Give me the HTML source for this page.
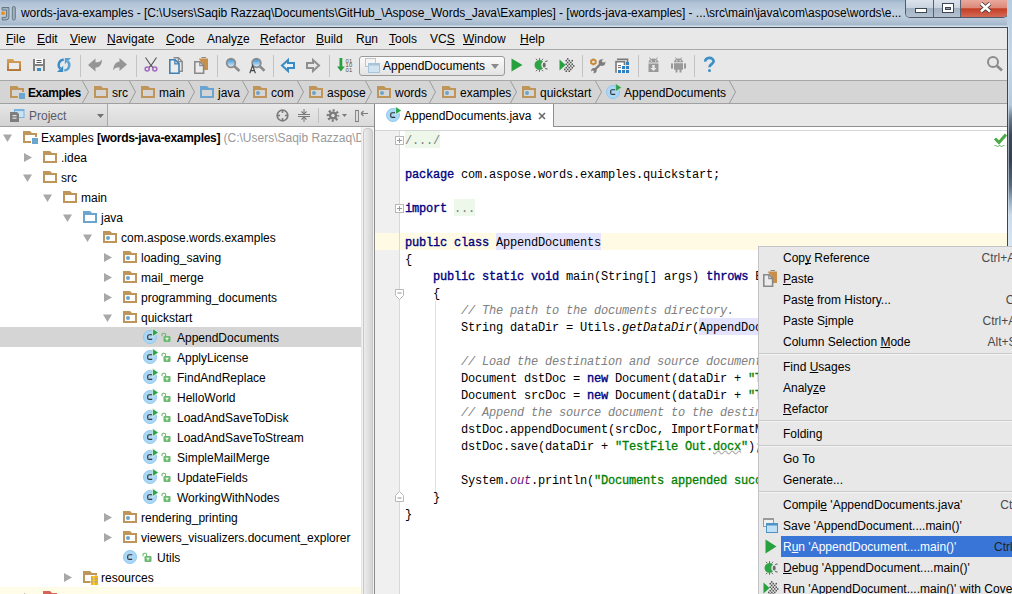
<!DOCTYPE html>
<html><head><meta charset="utf-8">
<style>
*{box-sizing:border-box}
html,body{margin:0;padding:0}
body{width:1012px;height:594px;overflow:hidden;position:relative;background:#e8e8e8;font-family:"Liberation Sans",sans-serif;font-size:12px;color:#000}
.a{position:absolute}
.t{position:absolute;white-space:pre;line-height:20px}
svg{position:absolute;overflow:visible}
#title{left:0;top:0;width:1012px;height:28px;background:linear-gradient(#9fb4c9 0,#afc2d6 3px,#c0cfdf 11px,#bccbdc 18px,#a3b7cb 25px,#d6e0ea 26px,#d6e0ea 27px)}
#menubar{left:0;top:28px;width:1007px;height:22px;background:#e8e8e8;border-bottom:1px solid #a9a9a9}
#menubar .t{top:1px;line-height:20px}
#toolbar{left:0;top:50px;width:1007px;height:30px;background:#e8e8e8}
.sep{position:absolute;width:1px;background:#c4c4c4}
#crumbs{left:0;top:80px;width:1007px;height:24px;background:#d5d5d5;border-top:1px solid #a8a8a8;border-bottom:1px solid #a0a0a0}
#projhdr{left:0;top:104px;width:374px;height:23px;background:linear-gradient(#e9e9e9,#dadada);border-bottom:1px solid #a0a0a0}
#tree{left:0;top:127px;width:374px;height:467px;background:#fff;overflow:hidden}
#split{left:374px;top:104px;width:1px;height:490px;background:#8a8a8a}
#tabs{left:375px;top:104px;width:632px;height:27px;background:#fff}
#editor{left:375px;top:131px;width:632px;height:463px;background:#fff;overflow:hidden}
.code{position:absolute;white-space:pre;font-family:"Liberation Mono",monospace;font-size:12px;letter-spacing:-0.2px;line-height:17px;left:30px}
.kw{color:#000080;font-weight:normal;-webkit-text-stroke:0.35px #000080}
.cm{color:#808080;font-style:italic}
.st{color:#008000;font-weight:normal;-webkit-text-stroke:0.3px #008000}
.it{font-style:italic}
.fl{color:#660e7a;font-style:italic}
#frame{left:1007px;top:0;width:5px;height:594px;background:linear-gradient(#b8cce0 0,#c2d7ea 60px,#b4cadf 105px,#6a7c8e 118px,#3c4857 135px,#34404e 160px,#56687b 185px,#9ab2c8 202px,#cadcec 215px,#d8e6f2 246px)}
#ctx{left:758px;top:246px;width:260px;height:360px;background:#e8e8e8;border:1px solid #c4c4c8;overflow:hidden}
#ctx .t{left:25px;line-height:21px}
#ctx .sc{color:#505050}
.msep{position:absolute;left:1px;right:0;height:1px;background:#c9c9c9}
u{text-decoration:underline;text-underline-offset:1px;text-decoration-skip-ink:none}
</style></head><body>
<svg width="0" height="0" style="position:absolute;left:0;top:0">
<defs>
<symbol id="td" viewBox="0 0 9 8"><path d="M0 0.5H9L4.5 8z" fill="#a8a8a8"/></symbol>
<symbol id="tr" viewBox="0 0 8 9"><path d="M0 0L8 4.5L0 9z" fill="#a8a8a8"/></symbol>
<symbol id="fold" viewBox="0 0 14 12"><path d="M0 0h7l2 2h5v10H0z" fill="#bf955a"/><rect x="2" y="4" width="10" height="6" fill="#fff"/></symbol>
<symbol id="jfold" viewBox="0 0 14 12"><path d="M0 0h7l2 2h5v10H0z" fill="#6ba5cf"/><rect x="2" y="4" width="10" height="6" fill="#fff"/></symbol>
<symbol id="pkg" viewBox="0 0 14 12"><path d="M0 0h7l2 2h5v10H0z" fill="#bf955a"/><rect x="2" y="4" width="10" height="6" fill="#fff"/><circle cx="5" cy="7" r="2" fill="#6aa4cd"/></symbol>
<symbol id="mod" viewBox="0 0 16 14"><path d="M0 0h7l2 2h5v10H0z" fill="#bf955a"/><rect x="2" y="4" width="10" height="6" fill="#fff"/><rect x="8" y="6" width="8" height="8" fill="#fff"/><rect x="9" y="7" width="6" height="6" fill="#6aa6cf"/></symbol>
<symbol id="res" viewBox="0 0 16 14"><path d="M0 0h7l2 2h5v10H0z" fill="#bf955a"/><rect x="2" y="4" width="10" height="6" fill="#fff"/><rect x="7.5" y="4.5" width="8" height="9.5" fill="#fff"/><rect x="8" y="5" width="7" height="9" fill="#f2b712"/><rect x="8" y="7.3" width="7" height="1" fill="#a0a0a0"/><rect x="8" y="10.4" width="7" height="1" fill="#a0a0a0"/><rect x="10.5" y="5" width="0.8" height="9" fill="#ffe070"/></symbol>
<symbol id="modc" viewBox="0 0 16 14"><path d="M0 0h7l2 2h5v10H0z" fill="#bf955a"/><rect x="2" y="4" width="10" height="6" fill="#d5d5d5"/><rect x="8" y="6" width="8" height="8" fill="#d5d5d5"/><rect x="9" y="7" width="6" height="6" fill="#6aa6cf"/></symbol>
<symbol id="pkgc" viewBox="0 0 14 12"><path d="M0 0h7l2 2h5v10H0z" fill="#bf955a"/><rect x="2" y="4" width="10" height="6" fill="#d5d5d5"/><circle cx="5" cy="7" r="2" fill="#6aa4cd"/></symbol>
<symbol id="foldc" viewBox="0 0 14 12"><path d="M0 0h7l2 2h5v10H0z" fill="#bf955a"/><rect x="2" y="4" width="10" height="6" fill="#d5d5d5"/></symbol>
<symbol id="jfoldc" viewBox="0 0 14 12"><path d="M0 0h7l2 2h5v10H0z" fill="#6ba5cf"/><rect x="2" y="4" width="10" height="6" fill="#d5d5d5"/></symbol>
<symbol id="clsw" viewBox="0 0 16 17"><circle cx="7" cy="9" r="6.6" fill="#a9d7f5" stroke="#8cc4ec" stroke-width="0.8"/><path d="M9.2 6.7H6.3Q4.7 6.7 4.7 8.2V9.9Q4.7 11.4 6.3 11.4H9.2" stroke="#333" stroke-width="1.15" fill="none"/><path d="M9.6 0.6L15.5 4.6L9.6 8.6z" fill="#26a447" stroke="#fff" stroke-width="0.6"/></symbol>
<symbol id="redf" viewBox="0 0 14 12"><path d="M0 0h7l2 2h5v10H0z" fill="#d9625a"/><rect x="2" y="4" width="10" height="6" fill="#fff"/></symbol>
<symbol id="cls" viewBox="0 0 16 17"><circle cx="7" cy="9" r="6.6" fill="#a9d7f5" stroke="#8cc4ec" stroke-width="0.8"/><path d="M9.2 6.7H6.3Q4.7 6.7 4.7 8.2V9.9Q4.7 11.4 6.3 11.4H9.2" stroke="#333" stroke-width="1.15" fill="none"/><path d="M9.6 0.6L15.5 4.6L9.6 8.6z" fill="#26a447" stroke="#fff" stroke-width="0.6"/></symbol>
<symbol id="clsc" viewBox="0 0 16 17"><circle cx="7" cy="9" r="6.6" fill="#a9d7f5" stroke="#8cc4ec" stroke-width="0.8"/><path d="M9.2 6.7H6.3Q4.7 6.7 4.7 8.2V9.9Q4.7 11.4 6.3 11.4H9.2" stroke="#333" stroke-width="1.15" fill="none"/><path d="M9.6 0.6L15.5 4.6L9.6 8.6z" fill="#26a447" stroke="#d5d5d5" stroke-width="0.6"/></symbol>
<symbol id="clsp" viewBox="0 0 16 17"><circle cx="7" cy="9" r="6.6" fill="#a9d7f5" stroke="#8cc4ec" stroke-width="0.8"/><path d="M9.2 6.7H6.3Q4.7 6.7 4.7 8.2V9.9Q4.7 11.4 6.3 11.4H9.2" stroke="#333" stroke-width="1.15" fill="none"/></symbol>
<symbol id="lock" viewBox="0 0 10 10"><path d="M1 4.2V2.6Q1 1.2 2.4 1.2H3.2Q4.6 1.2 4.6 2.6V4" stroke="#6cba72" stroke-width="1.1" fill="none"/><rect x="2.5" y="4" width="7" height="6" rx="1.2" fill="#6cba72"/><path d="M4.5 6.2h3M6 6.2v2.4" stroke="#fff" stroke-width="1.1"/></symbol>
</defs></svg>
<div id="title" class="a">
<svg style="left:0;top:5px" width="16" height="16" viewBox="0 0 16 16"><path d="M2 2.5h7v9.5q0 3-3 3H2.2v-2.6h2.9q1.3 0 1.3-1.3V5.1H2z" fill="#9fb2bd" stroke="#5d6f7b" stroke-width="0.9"/><rect x="12.3" y="1.5" width="3" height="13.5" rx="1.4" fill="#9fb2bd" stroke="#5d6f7b" stroke-width="0.9"/><circle cx="3" cy="8.2" r="1.9" fill="#f08d17"/></svg>
<div class="t" style="left:21px;top:3px;color:#000;letter-spacing:-0.05px">words-java-examples - [C:\Users\Saqib Razzaq\Documents\GitHub_\Aspose_Words_Java\Examples] - [words-java-examples] - ...\src\main\java\com\aspose\words\e...</div>
<div class="a" style="left:905px;top:0;width:103px;height:18px;border:1px solid #4e5a68;border-top:none;border-radius:0 0 5px 5px;overflow:hidden">
 <div class="a" style="left:0;top:0;width:28px;height:17px;background:linear-gradient(#dbe3ec 0,#c9d4e0 45%,#a4b3c4 50%,#b3c1d0 100%);border-right:1px solid #56626f"></div>
 <div class="a" style="left:28px;top:0;width:27px;height:17px;background:linear-gradient(#dbe3ec 0,#c9d4e0 45%,#a4b3c4 50%,#b3c1d0 100%);border-right:1px solid #56626f"></div>
 <div class="a" style="left:55px;top:0;width:47px;height:17px;background:linear-gradient(#e9a99d 0,#dd8a79 45%,#c43d24 52%,#d46a55 100%)"></div>
 <div class="a" style="left:9px;top:8px;width:12px;height:5px;background:#fff;border:1px solid #3c4550"></div>
 <div class="a" style="left:36px;top:3px;width:12px;height:10px;background:#fff;border:1px solid #3c4550"><div class="a" style="left:2px;top:3px;width:6px;height:3px;background:#8fa0b2;border:1px solid #3c4550"></div></div>
 <svg style="left:73px;top:2px" width="13" height="11" viewBox="0 0 13 11"><path d="M2 1.5L11 9.5M11 1.5L2 9.5" stroke="#3a3030" stroke-width="4.2"/><path d="M2 1.5L11 9.5M11 1.5L2 9.5" stroke="#fff" stroke-width="2.6"/></svg>
</div>
<div class="a" style="left:0;top:27px;width:1007px;height:1px;background:#3e4d5e"></div>
</div>
<div id="menubar" class="a">
<div class="t" style="left:6px"><u>F</u>ile</div>
<div class="t" style="left:37px"><u>E</u>dit</div>
<div class="t" style="left:70px"><u>V</u>iew</div>
<div class="t" style="left:107px"><u>N</u>avigate</div>
<div class="t" style="left:166px"><u>C</u>ode</div>
<div class="t" style="left:207px">Analy<u>z</u>e</div>
<div class="t" style="left:260px"><u>R</u>efactor</div>
<div class="t" style="left:316px"><u>B</u>uild</div>
<div class="t" style="left:356px">R<u>u</u>n</div>
<div class="t" style="left:389px"><u>T</u>ools</div>
<div class="t" style="left:430px">VC<u>S</u></div>
<div class="t" style="left:463px"><u>W</u>indow</div>
<div class="t" style="left:520px"><u>H</u>elp</div>
</div>
<div id="toolbar" class="a">
<svg style="left:7px;top:9px" width="14" height="12"><defs><linearGradient id="gf" x1="0" y1="0" x2="0" y2="1"><stop offset="0" stop-color="#d9a35c"/><stop offset="1" stop-color="#b27639"/></linearGradient></defs><path d="M0 0h6l1.5 2H14v10H0z" fill="url(#gf)"/><rect x="2" y="4" width="10" height="6" fill="#ececec"/></svg>
<svg style="left:33px;top:9px" width="12" height="12"><path d="M0 0h12v12H0z" fill="#808080"/><rect x="2" y="0" width="8" height="5" fill="#fff"/><rect x="3.5" y="1" width="5" height="1" fill="#555"/><rect x="3.5" y="3" width="5" height="1" fill="#555"/><rect x="2" y="7" width="8" height="5" fill="#e8e8e8"/><rect x="4" y="9" width="4" height="3" fill="#3c8dc5"/></svg>
<svg style="left:57px;top:8px" width="14" height="14" viewBox="0 0 14 14"><path d="M6.8 1.6A5.3 5.3 0 0 0 3.2 10.6" stroke="#3a8cc6" stroke-width="2.4" fill="none"/><path d="M0 14H6.2V7.8z" fill="#3a8cc6"/><path d="M7.2 12.4A5.3 5.3 0 0 0 10.8 3.4" stroke="#5ba2d4" stroke-width="2.4" fill="none"/><path d="M14 0H7.8V6.2z" fill="#5ba2d4"/></svg>
<div class="sep" style="left:80px;top:5px;height:22px"></div>
<svg style="left:88px;top:8px" width="14" height="14" viewBox="0 0 14 14"><path d="M0 7L7.5 0.5V4.3C10.5 4.3 12.8 3.8 14 1.2C14 6.8 11.5 9.6 7.5 9.6V13.5z" fill="#959595"/></svg>
<svg style="left:113px;top:8px" width="14" height="14" viewBox="0 0 14 14"><path d="M14 6.5L6.5 0V3.8C3.5 3.8 0.8 5.5 0 12.6C1.2 10 3.5 9.2 6.5 9.2V13z" fill="#959595"/></svg>
<div class="sep" style="left:136px;top:5px;height:22px"></div>
<svg style="left:144px;top:7px" width="14" height="15" viewBox="0 0 14 15"><path d="M1.5 0.5L7 8.5L12.5 0.5M7 8.5L4.5 11M7 8.5L9.5 11" stroke="#555" stroke-width="1.1" fill="none"/><circle cx="3.2" cy="12" r="2" stroke="#a46bc2" stroke-width="1.6" fill="none"/><circle cx="10.8" cy="12" r="2" stroke="#a46bc2" stroke-width="1.6" fill="none"/></svg>
<svg style="left:169px;top:7px" width="15" height="17" viewBox="0 0 15 17"><path d="M4.5 0.8h5l3.7 3.7v9.7h-2.7" stroke="#8c8c8c" stroke-width="1.5" fill="none"/><path d="M9.3 0.8v3.9h3.9" stroke="#8c8c8c" stroke-width="1.2" fill="none"/><path d="M0.8 2.8h5.3l3.9 3.9v9.5H0.8z" fill="#ececec" stroke="#3f80b6" stroke-width="1.6"/><path d="M5.9 2.8v4h4" stroke="#3f80b6" stroke-width="1.3" fill="none"/></svg>
<svg style="left:194px;top:7px" width="15" height="17" viewBox="0 0 15 17"><path d="M5 1.5h9v11.5H9V6.5L5.5 3z" fill="#c88f48"/><rect x="7.5" y="0" width="4.5" height="1" fill="#8a8a8a"/><path d="M0.8 4.8h5.2l3.6 3.6v7.8H0.8z" fill="#ececec" stroke="#8a8a8a" stroke-width="1.6"/><path d="M5.8 4.8v3.8h3.8" stroke="#8a8a8a" stroke-width="1.2" fill="none"/></svg>
<div class="sep" style="left:217px;top:5px;height:22px"></div>
<svg style="left:225px;top:7px" width="16" height="15" viewBox="0 0 16 15"><defs><linearGradient id="gl" x1="0" y1="0" x2="0" y2="1"><stop offset="0" stop-color="#2f8fd6"/><stop offset="1" stop-color="#e6f2fb"/></linearGradient></defs><circle cx="6" cy="6" r="4.3" fill="url(#gl)" stroke="#8c8c8c" stroke-width="1.8"/><path d="M9.3 9.3L14.5 14" stroke="#8c8c8c" stroke-width="2.6"/></svg>
<svg style="left:249px;top:7px" width="17" height="17" viewBox="0 0 17 17"><circle cx="7.5" cy="6" r="4.3" fill="url(#gl)" stroke="#8c8c8c" stroke-width="1.8"/><path d="M10.8 9.3L15.5 13.8" stroke="#8c8c8c" stroke-width="2.6"/><path d="M0.8 16.3L3.6 8.5L6.4 16.3M1.8 13.6h3.6" stroke="#444" stroke-width="1.1" fill="none"/></svg>
<div class="sep" style="left:273px;top:5px;height:22px"></div>
<svg style="left:281px;top:9px" width="14" height="13" viewBox="0 0 14 13"><path d="M1 6.5L7 1V4H13V9H7V12z" fill="#e6f0f8" stroke="#3a8ac4" stroke-width="2" stroke-linejoin="miter"/></svg>
<svg style="left:306px;top:9px" width="14" height="13" viewBox="0 0 14 13"><path d="M13 6.5L7 1V4H1V9H7V12z" fill="#e8e8e8" stroke="#8f8f8f" stroke-width="2"/></svg>
<div class="sep" style="left:329px;top:5px;height:22px"></div>
<svg style="left:337px;top:8px" width="16" height="15" viewBox="0 0 16 15"><path d="M2.5 0h2.8v8.5H7.8L3.9 13.5L0 8.5H2.5z" fill="#27a03e"/><g font-family="Liberation Sans" font-size="5.8" fill="#505050" letter-spacing="0.3"><text x="8.6" y="4.6">01</text><text x="8.6" y="9.4">10</text><text x="8.6" y="14.2">01</text></g></svg>
<div class="a" style="left:359px;top:6px;width:146px;height:20px;border:1px solid #9a9a9a;border-radius:3px;background:linear-gradient(#fbfbfb,#e3e3e3)"></div>
<svg style="left:365px;top:8px" width="15" height="15" viewBox="0 0 15 15"><rect x="0.5" y="0.5" width="10" height="8" fill="#f4f4f4" stroke="#c4c4c4"/><rect x="3.5" y="5.5" width="11" height="9" fill="#cfe3f1" stroke="#a8c4d8"/><rect x="3.5" y="5.5" width="11" height="2" fill="#a8c4d8"/></svg>
<div class="t" style="left:383px;top:6px">AppendDocuments</div>
<svg style="left:491px;top:14px" width="8" height="5"><path d="M0 0h8L4 5z" fill="#8a8a8a"/></svg>
<svg style="left:511px;top:8px" width="12" height="14" viewBox="0 0 12 14"><path d="M0.5 0.5L11.5 7L0.5 13.5z" fill="#27a03e"/></svg>
<svg style="left:533px;top:7px" width="16" height="16" viewBox="0 0 16 16"><path d="M3 1.8l1.3 1.5M6.5 1.2v2M10 1.8L8.7 3.3M3 14.2l1.3-1.5M6.5 14.8v-2M10 14.2l-1.3-1.5" stroke="#666" stroke-width="1"/><path d="M10 4.4A5 5 0 1 0 10 11.6A4.5 4.5 0 0 1 10 4.4z" fill="#2ea446"/><ellipse cx="11.2" cy="8" rx="1.5" ry="2.6" fill="#6a6a6a"/><path d="M12.3 4.8q0.8-1 2.3-0.8M12.3 11.2q0.8 1 2.3 0.8" stroke="#666" stroke-width="1.1" fill="none"/></svg>
<svg style="left:559px;top:7px" width="15" height="16" viewBox="0 0 15 16"><path d="M0.5 2.5L6.5 8L0.5 13.5z" fill="#27a03e"/><g fill="#555"><circle cx="5.75" cy="12.40" r="0.85"/><circle cx="7.25" cy="3.65" r="0.85"/><circle cx="7.25" cy="7.15" r="0.85"/><circle cx="7.25" cy="10.65" r="0.85"/><circle cx="7.25" cy="14.15" r="0.85"/><circle cx="8.75" cy="1.90" r="0.85"/><circle cx="8.75" cy="5.40" r="0.85"/><circle cx="8.75" cy="8.90" r="0.85"/><circle cx="8.75" cy="12.40" r="0.85"/><circle cx="10.25" cy="3.65" r="0.85"/><circle cx="10.25" cy="7.15" r="0.85"/><circle cx="10.25" cy="10.65" r="0.85"/><circle cx="10.25" cy="14.15" r="0.85"/><circle cx="11.75" cy="5.40" r="0.85"/><circle cx="11.75" cy="8.90" r="0.85"/><circle cx="11.75" cy="12.40" r="0.85"/><circle cx="13.25" cy="3.65" r="0.85"/><circle cx="13.25" cy="7.15" r="0.85"/><circle cx="13.25" cy="10.65" r="0.85"/><circle cx="14.75" cy="8.90" r="0.85"/></g></svg>
<div class="sep" style="left:582px;top:5px;height:22px"></div>
<svg style="left:589px;top:7px" width="17" height="17" viewBox="0 0 17 17"><path d="M5.5 13L12.5 6" stroke="#7d7d7d" stroke-width="2.4"/><circle cx="13" cy="5.6" r="3.3" fill="#7d7d7d"/><circle cx="14.5" cy="4.1" r="1.5" fill="#e8e8e8"/><path d="M14.2 4.4L17 1.6" stroke="#e8e8e8" stroke-width="2"/><circle cx="4.9" cy="13.6" r="2.7" fill="#7d7d7d"/><circle cx="3.7" cy="14.8" r="1.2" fill="#e8e8e8"/><path d="M3.9 14.6L1 17.5" stroke="#e8e8e8" stroke-width="1.8"/><path d="M4.40 7.40 L2.23 6.15 L2.23 3.65 L4.40 2.40 L6.57 3.65 L6.57 6.15z" fill="none" stroke="#c98b3b" stroke-width="2.1"/></svg>
<svg style="left:614px;top:7px" width="16" height="17" viewBox="0 0 16 17"><path d="M3 2.2h10.5v4" stroke="#7a7a7a" stroke-width="1.6" fill="none"/><rect x="2.6" y="5.2" width="7" height="10.5" fill="#fff"/><path d="M2 15.8V4.6h8.5v3.5" stroke="#7a7a7a" stroke-width="1.6" fill="none"/><path d="M4 8.6h3M4 10.6h3" stroke="#555" stroke-width="0.9"/><g fill="#2f80c2"><rect x="12" y="5" width="3" height="3"/><rect x="8" y="9" width="3" height="3"/><rect x="12" y="9" width="3" height="3"/><rect x="4" y="13" width="3" height="3"/><rect x="8" y="13" width="3" height="3"/><rect x="12" y="13" width="3" height="3"/></g></svg>
<div class="sep" style="left:638px;top:5px;height:22px"></div>
<svg style="left:648px;top:7px" width="11" height="16" viewBox="0 0 11 16"><path d="M1.5 0.5l1.5 2M9.5 0.5L8 2.5" stroke="#999" stroke-width="1"/><path d="M0.5 5.5A5 4 0 0 1 10.5 5.5z" fill="#999"/><circle cx="3.3" cy="4" r="0.7" fill="#e8e8e8"/><circle cx="7.7" cy="4" r="0.7" fill="#e8e8e8"/><rect x="0.5" y="6.5" width="10" height="8.5" fill="#999"/><path d="M4.3 8h2.4v3h2L5.5 14 2.3 11h2z" fill="#e8e8e8"/></svg>
<svg style="left:671px;top:7px" width="15" height="16" viewBox="0 0 15 16"><path d="M4.5 0.5l1 1.5M10.5 0.5L9.5 2" stroke="#999" stroke-width="1"/><path d="M3 5.3A4.5 3.8 0 0 1 12 5.3z" fill="#999"/><rect x="3" y="6.2" width="9" height="6.5" fill="#999"/><rect x="0" y="6.2" width="2" height="5.5" rx="0.8" fill="#999"/><rect x="13" y="6.2" width="2" height="5.5" rx="0.8" fill="#999"/><rect x="4.5" y="12" width="2" height="3.5" fill="#999"/><rect x="8.5" y="12" width="2" height="3.5" fill="#999"/><circle cx="5.8" cy="3.8" r="0.7" fill="#e8e8e8"/><circle cx="9.2" cy="3.8" r="0.7" fill="#e8e8e8"/></svg>
<div class="sep" style="left:694px;top:5px;height:22px"></div>
<svg style="left:703px;top:7px" width="13" height="16" viewBox="0 0 13 16"><path d="M2.2 4.6A4.2 3.6 0 0 1 10.6 4.2C10.6 7 6.5 7.2 6.5 10.2" stroke="#3d8fc6" stroke-width="2.7" fill="none"/><circle cx="6.5" cy="13.6" r="1.5" fill="#3d8fc6"/></svg>
<svg style="left:986px;top:5px" width="18" height="17" viewBox="0 0 18 17"><circle cx="7" cy="7" r="5" stroke="#8c8c8c" stroke-width="2" fill="none"/><path d="M10.8 10.8L16 15.5" stroke="#8c8c8c" stroke-width="2.8"/></svg>
</div>
<div id="crumbs" class="a">
<svg style="left:10px;top:5px" width="16" height="14"><use href="#modc"/></svg>
<div class="t" style="left:28px;top:2px;font-weight:bold;letter-spacing:-0.4px">Examples</div>
<svg style="left:94px;top:5px" width="14" height="12"><use href="#foldc"/></svg>
<div class="t" style="left:112px;top:2px">src</div>
<svg style="left:141px;top:5px" width="14" height="12"><use href="#foldc"/></svg>
<div class="t" style="left:159px;top:2px">main</div>
<svg style="left:200px;top:5px" width="14" height="12"><use href="#jfoldc"/></svg>
<div class="t" style="left:218px;top:2px">java</div>
<svg style="left:253px;top:5px" width="14" height="12"><use href="#pkgc"/></svg>
<div class="t" style="left:271px;top:2px">com</div>
<svg style="left:309px;top:5px" width="14" height="12"><use href="#pkgc"/></svg>
<div class="t" style="left:327px;top:2px">aspose</div>
<svg style="left:377px;top:5px" width="14" height="12"><use href="#pkgc"/></svg>
<div class="t" style="left:395px;top:2px">words</div>
<svg style="left:442px;top:5px" width="14" height="12"><use href="#pkgc"/></svg>
<div class="t" style="left:460px;top:2px">examples</div>
<svg style="left:522px;top:5px" width="14" height="12"><use href="#pkgc"/></svg>
<div class="t" style="left:540px;top:2px">quickstart</div>
<svg style="left:606px;top:2px" width="16" height="17"><use href="#clsc"/></svg>
<div class="t" style="left:624px;top:2px">AppendDocuments</div>
<svg style="left:0;top:0" width="1007" height="22"><g fill="none" stroke="#9c9c9c" stroke-width="1"><path d="M82.5 0L88.5 11L82.5 22"/><path d="M129.5 0L135.5 11L129.5 22"/><path d="M188.5 0L194.5 11L188.5 22"/><path d="M242.5 0L248.5 11L242.5 22"/><path d="M297.5 0L303.5 11L297.5 22"/><path d="M365.5 0L371.5 11L365.5 22"/><path d="M429.5 0L435.5 11L429.5 22"/><path d="M510.5 0L516.5 11L510.5 22"/><path d="M595.5 0L601.5 11L595.5 22"/><path d="M729.5 0L735.5 11L729.5 22"/></g></svg>
</div>
<div id="projhdr" class="a">
<div class="a" style="left:0;top:0;width:108px;height:22px;background:linear-gradient(#e6e6e6,#d3d3d3);border-right:1px solid #a8a8a8"></div>
<svg style="left:10px;top:5px" width="15" height="13" viewBox="0 0 15 13"><rect x="4.5" y="0.5" width="9.5" height="8" fill="#c8e3f5" stroke="#79b3dd"/><rect x="4.5" y="0.5" width="9.5" height="1.6" fill="#79b3dd"/><path d="M0 3h7l2 2v8H0z" fill="#7d7d7d"/><rect x="2.5" y="6" width="4" height="1.2" fill="#e0e0e0"/><rect x="2.5" y="8.6" width="4" height="1.2" fill="#e0e0e0"/></svg>
<div class="t" style="left:29px;top:2px;color:#5a5a6a">Project</div>
<svg style="left:97px;top:10px" width="7" height="4"><path d="M0 0h7L3.5 4z" fill="#707070"/></svg>
<svg style="left:276px;top:5px" width="13" height="13" viewBox="0 0 13 13"><circle cx="6.5" cy="6.5" r="5.3" fill="none" stroke="#7a7a7a" stroke-width="1.7"/><path d="M6.5 1.5v2.6M6.5 8.9v2.6M1.5 6.5h2.6M8.9 6.5h2.6" stroke="#7a7a7a" stroke-width="1.6"/></svg>
<svg style="left:298px;top:5px" width="12" height="13" viewBox="0 0 12 13"><path d="M0 5.5h12M0 7.5h12M6 0v4M6 9v4" stroke="#7a7a7a" stroke-width="1"/><path d="M3.5 2.5L6 5L8.5 2.5M3.5 10.5L6 8L8.5 10.5" stroke="#7a7a7a" stroke-width="1.2" fill="none"/></svg>
<div class="sep" style="left:318px;top:4px;height:15px;background:#c0c0c0"></div>
<svg style="left:327px;top:5px" width="20" height="13" viewBox="0 0 20 13"><circle cx="6" cy="6.5" r="5.2" fill="none" stroke="#7a7a7a" stroke-width="2.2" stroke-dasharray="2.1 1.98" stroke-dashoffset="1"/><circle cx="6" cy="6.5" r="4.1" fill="#7a7a7a"/><circle cx="6" cy="6.5" r="1.7" fill="#e2e2e2"/><path d="M15 5h5L17.5 8z" fill="#7a7a7a"/></svg>
<svg style="left:355px;top:6px" width="13" height="12" viewBox="0 0 13 12"><rect x="0.7" y="0.5" width="2.6" height="11" fill="#fff" stroke="#7a7a7a" stroke-width="1.1"/><path d="M6 3.5h7M6 3.5L8.5 1M6 3.5L8.5 6" stroke="#7a7a7a" stroke-width="1.1" fill="none"/></svg>
</div>
<div id="tree" class="a">
<svg style="left:3px;top:7px" width="9" height="8"><use href="#td"/></svg>
<svg style="left:23px;top:4px" width="16" height="14"><use href="#mod"/></svg>
<div class="t" style="left:41px;top:1px">Examples <b style="letter-spacing:-0.3px">[words-java-examples]</b> <span style="color:#999">(C:\Users\Saqib Razzaq\Documents\GitHub_\Aspose_Words_Java\Examples)</span></div>
<svg style="left:24px;top:26px" width="8" height="9"><use href="#tr"/></svg>
<svg style="left:43px;top:24px" width="14" height="12"><use href="#fold"/></svg>
<div class="t" style="left:61px;top:21px">.idea</div>
<svg style="left:23px;top:47px" width="9" height="8"><use href="#td"/></svg>
<svg style="left:43px;top:44px" width="14" height="12"><use href="#fold"/></svg>
<div class="t" style="left:61px;top:41px">src</div>
<svg style="left:43px;top:67px" width="9" height="8"><use href="#td"/></svg>
<svg style="left:63px;top:64px" width="14" height="12"><use href="#fold"/></svg>
<div class="t" style="left:81px;top:61px">main</div>
<svg style="left:63px;top:87px" width="9" height="8"><use href="#td"/></svg>
<svg style="left:83px;top:84px" width="14" height="12"><use href="#jfold"/></svg>
<div class="t" style="left:101px;top:81px">java</div>
<svg style="left:83px;top:107px" width="9" height="8"><use href="#td"/></svg>
<svg style="left:103px;top:104px" width="14" height="12"><use href="#pkg"/></svg>
<div class="t" style="left:121px;top:101px">com.aspose.words.examples</div>
<svg style="left:104px;top:126px" width="8" height="9"><use href="#tr"/></svg>
<svg style="left:123px;top:124px" width="14" height="12"><use href="#pkg"/></svg>
<div class="t" style="left:141px;top:121px">loading_saving</div>
<svg style="left:104px;top:146px" width="8" height="9"><use href="#tr"/></svg>
<svg style="left:123px;top:144px" width="14" height="12"><use href="#pkg"/></svg>
<div class="t" style="left:141px;top:141px">mail_merge</div>
<svg style="left:104px;top:166px" width="8" height="9"><use href="#tr"/></svg>
<svg style="left:123px;top:164px" width="14" height="12"><use href="#pkg"/></svg>
<div class="t" style="left:141px;top:161px">programming_documents</div>
<svg style="left:103px;top:187px" width="9" height="8"><use href="#td"/></svg>
<svg style="left:123px;top:184px" width="14" height="12"><use href="#pkg"/></svg>
<div class="t" style="left:141px;top:181px">quickstart</div>
<div class="a" style="left:0;top:200px;width:361px;height:20px;background:#d5d5d5"></div>
<svg style="left:143px;top:201px" width="16" height="17"><use href="#cls"/></svg>
<svg style="left:161px;top:205px" width="10" height="10"><use href="#lock"/></svg>
<div class="t" style="left:177px;top:201px">AppendDocuments</div>
<svg style="left:143px;top:221px" width="16" height="17"><use href="#cls"/></svg>
<svg style="left:161px;top:225px" width="10" height="10"><use href="#lock"/></svg>
<div class="t" style="left:177px;top:221px">ApplyLicense</div>
<svg style="left:143px;top:241px" width="16" height="17"><use href="#cls"/></svg>
<svg style="left:161px;top:245px" width="10" height="10"><use href="#lock"/></svg>
<div class="t" style="left:177px;top:241px">FindAndReplace</div>
<svg style="left:143px;top:261px" width="16" height="17"><use href="#cls"/></svg>
<svg style="left:161px;top:265px" width="10" height="10"><use href="#lock"/></svg>
<div class="t" style="left:177px;top:261px">HelloWorld</div>
<svg style="left:143px;top:281px" width="16" height="17"><use href="#cls"/></svg>
<svg style="left:161px;top:285px" width="10" height="10"><use href="#lock"/></svg>
<div class="t" style="left:177px;top:281px">LoadAndSaveToDisk</div>
<svg style="left:143px;top:301px" width="16" height="17"><use href="#cls"/></svg>
<svg style="left:161px;top:305px" width="10" height="10"><use href="#lock"/></svg>
<div class="t" style="left:177px;top:301px">LoadAndSaveToStream</div>
<svg style="left:143px;top:321px" width="16" height="17"><use href="#cls"/></svg>
<svg style="left:161px;top:325px" width="10" height="10"><use href="#lock"/></svg>
<div class="t" style="left:177px;top:321px">SimpleMailMerge</div>
<svg style="left:143px;top:341px" width="16" height="17"><use href="#cls"/></svg>
<svg style="left:161px;top:345px" width="10" height="10"><use href="#lock"/></svg>
<div class="t" style="left:177px;top:341px">UpdateFields</div>
<svg style="left:143px;top:361px" width="16" height="17"><use href="#cls"/></svg>
<svg style="left:161px;top:365px" width="10" height="10"><use href="#lock"/></svg>
<div class="t" style="left:177px;top:361px">WorkingWithNodes</div>
<svg style="left:104px;top:386px" width="8" height="9"><use href="#tr"/></svg>
<svg style="left:123px;top:384px" width="14" height="12"><use href="#pkg"/></svg>
<div class="t" style="left:141px;top:381px">rendering_printing</div>
<svg style="left:104px;top:406px" width="8" height="9"><use href="#tr"/></svg>
<svg style="left:123px;top:404px" width="14" height="12"><use href="#pkg"/></svg>
<div class="t" style="left:141px;top:401px">viewers_visualizers.document_explorer</div>
<svg style="left:123px;top:421px" width="16" height="17"><use href="#clsp"/></svg>
<svg style="left:142px;top:425px" width="10" height="10"><use href="#lock"/></svg>
<div class="t" style="left:157px;top:421px">Utils</div>
<svg style="left:64px;top:446px" width="8" height="9"><use href="#tr"/></svg>
<svg style="left:83px;top:444px" width="16" height="14"><use href="#res"/></svg>
<div class="t" style="left:101px;top:441px">resources</div>
<div class="a" style="left:0;top:460px;width:361px;height:20px;background:#fffde8"></div>
<svg style="left:24px;top:466px" width="8" height="9"><use href="#tr"/></svg>
<svg style="left:43px;top:464px" width="14" height="12"><use href="#redf"/></svg>
</div><!--/tree-->
<div class="a" style="left:361px;top:127px;width:13px;height:467px;background:#f2f2f2;border-left:1px solid #e6e6e6"></div>
<div class="a" style="left:363px;top:128px;width:10px;height:470px;border-radius:4px;border:1px solid #c8c8c8;background:linear-gradient(90deg,#ececec,#d4d4d4)"></div>
<div id="split" class="a"></div>
<div id="tabs" class="a">
<svg style="left:11px;top:2px" width="16" height="17"><use href="#clsw"/></svg>
<div class="t" style="left:29px;top:2px">AppendDocuments.java</div>
<svg style="left:163px;top:8px" width="8" height="8" viewBox="0 0 8 8"><path d="M1 1L7 7M7 1L1 7" stroke="#6a6a6a" stroke-width="1.6"/></svg>
<div class="a" style="left:178px;top:0;width:454px;height:23px;background:#e8e8e8;border-left:1px solid #909090;border-bottom:1px solid #909090"></div>
<div class="a" style="left:0;top:26px;width:632px;height:1px;background:#d4d4d4"></div>
</div>
<div id="editor" class="a">
<div class="a" style="left:0;top:102px;width:632px;height:17px;background:#fffae3"></div>
<div class="a" style="left:0;top:0;width:24px;height:463px;background:#f0f0f0"></div>
<div class="a" style="left:0;top:102px;width:24px;height:17px;background:#fffae3"></div>
<div class="a" style="left:24px;top:0;width:1px;height:463px;background:#d8d8d8"></div>
<div class="a" style="left:30px;top:0px;width:35px;height:17px;background:#edf7ea"></div>
<div class="a" style="left:79px;top:68px;width:21px;height:17px;background:#edf7ea"></div>
<div class="a" style="left:121px;top:102px;width:105px;height:17px;background:#e4e4ff"></div>
<div class="a" style="left:324px;top:187px;width:105px;height:17px;background:#e4e4ff"></div>
<div class="a" style="left:60px;top:170px;width:1px;height:196px;background:#e0e0e0"></div>
<div class="code" style="top:2px"><span style="color:#808080">/.../</span></div>
<div class="code" style="top:36px"><span class="kw">package</span> com.aspose.words.examples.quickstart;</div>
<div class="code" style="top:70px"><span class="kw">import</span> <span style="color:#808080">...</span></div>
<div class="code" style="top:104px"><span class="kw">public</span> <span class="kw">class</span> AppendDocuments</div>
<div class="code" style="top:121px">{</div>
<div class="code" style="top:138px">    <span class="kw">public</span> <span class="kw">static</span> <span class="kw">void</span> main(String[] args) <span class="kw">throws</span> Exception</div>
<div class="code" style="top:155px">    {</div>
<div class="code" style="top:172px">        <span class="cm">// The path to the documents directory.</span></div>
<div class="code" style="top:189px">        String dataDir = Utils.<i>getDataDir</i>(AppendDocuments.<span class="kw">class</span>);</div>
<div class="code" style="top:223px">        <span class="cm">// Load the destination and source documents from disk.</span></div>
<div class="code" style="top:240px">        Document dstDoc = <span class="kw">new</span> Document(dataDir + <span class="st">&quot;TestFile.Destination.doc&quot;</span>);</div>
<div class="code" style="top:257px">        Document srcDoc = <span class="kw">new</span> Document(dataDir + <span class="st">&quot;TestFile.Source.doc&quot;</span>);</div>
<div class="code" style="top:274px">        <span class="cm">// Append the source document to the destination document.</span></div>
<div class="code" style="top:291px">        dstDoc.appendDocument(srcDoc, ImportFormatMode.<span class="fl" style="font-weight:bold">KEEP_SOURCE_FORMATTING</span>);</div>
<div class="code" style="top:308px">        dstDoc.save(dataDir + <span class="st">&quot;TestFile Out.</span><span class="st" style="text-decoration:underline wavy #b0b0b0;text-underline-offset:0px">docx</span><span class="st">&quot;</span>);</div>
<div class="code" style="top:342px">        System.<span class="fl">out</span>.println(<span class="st">&quot;Documents appended successfully.&quot;</span>);</div>
<div class="code" style="top:359px">    }</div>
<div class="code" style="top:376px">}</div>
<svg style="left:20px;top:5px" width="9" height="9" viewBox="0 0 9 9"><rect x="0.5" y="0.5" width="8" height="8" fill="#fff" stroke="#b8b8b8"/><path d="M2 4.5h5M4.5 2v5" stroke="#999"/></svg>
<svg style="left:20px;top:73px" width="9" height="9" viewBox="0 0 9 9"><rect x="0.5" y="0.5" width="8" height="8" fill="#fff" stroke="#b8b8b8"/><path d="M2 4.5h5M4.5 2v5" stroke="#999"/></svg>
<svg style="left:20px;top:158px" width="9" height="11" viewBox="0 0 9 11"><path d="M0.5 0.5h8v6l-4 4-4-4z" fill="#fff" stroke="#b8b8b8"/><path d="M2.5 4h4" stroke="#909090"/></svg>
<svg style="left:20px;top:360px" width="9" height="11" viewBox="0 0 9 11"><path d="M0.5 10.5h8v-6l-4-4-4 4z" fill="#fff" stroke="#b8b8b8"/><path d="M2.5 7h4" stroke="#909090"/></svg>
<svg style="left:619px;top:2px" width="13" height="14" viewBox="0 0 13 14"><path d="M1 5.5L5 9.5L12 1.5" stroke="#4caa48" stroke-width="3" fill="none"/><path d="M0.5 13q1-2 2 0t2 0 2 0 2 0 2 0" stroke="#4caa48" stroke-width="0.9" fill="none"/></svg>
</div><!--/editor-->
<div id="frame" class="a"></div>
<div class="a" style="left:1008px;top:26px;width:1px;height:568px;background:rgba(225,235,245,0.6)"></div>
<div class="a" style="left:1007px;top:27px;width:1px;height:567px;background:#3a4654"></div>
<div id="ctx" class="a">
<div class="a" style="left:22px;top:289px;width:240px;height:21px;background:#3875d7"></div>
<div class="t" style="left:24px;top:1px;line-height:21px;">Cop<u>y</u> Reference</div>
<div class="t" style="left:222.5px;top:1px;line-height:21px;color:#4a4a4a">Ctrl+Alt+Shift+C</div>
<div class="t" style="left:24px;top:22px;line-height:21px;"><u>P</u>aste</div>
<div class="t" style="left:260px;top:22px;line-height:21px;color:#4a4a4a">Ctrl+V</div>
<div class="t" style="left:24px;top:43px;line-height:21px;">Past<u>e</u> from History...</div>
<div class="t" style="left:246.7px;top:43px;line-height:21px;color:#4a4a4a">Ctrl+Shift+V</div>
<div class="t" style="left:24px;top:64px;line-height:21px;">Paste S<u>i</u>mple</div>
<div class="t" style="left:223.5px;top:64px;line-height:21px;color:#4a4a4a">Ctrl+Alt+Shift+V</div>
<div class="t" style="left:24px;top:85px;line-height:21px;">Column Selection <u>M</u>ode</div>
<div class="t" style="left:228.5px;top:85px;line-height:21px;color:#4a4a4a">Alt+Shift+Insert</div>
<div class="t" style="left:24px;top:110px;line-height:21px;">Find <u>U</u>sages</div>
<div class="t" style="left:260px;top:110px;line-height:21px;color:#4a4a4a">Alt+F7</div>
<div class="t" style="left:24px;top:131px;line-height:21px;">Analy<u>z</u>e</div>
<div class="t" style="left:24px;top:152px;line-height:21px;"><u>R</u>efactor</div>
<div class="t" style="left:24px;top:177px;line-height:21px;">Folding</div>
<div class="t" style="left:24px;top:202px;line-height:21px;">Go To</div>
<div class="t" style="left:24px;top:223px;line-height:21px;">Generate...</div>
<div class="t" style="left:260px;top:223px;line-height:21px;color:#4a4a4a">Alt+Insert</div>
<div class="t" style="left:24px;top:248px;line-height:21px;">Compil<u>e</u> 'AppendDocuments.java'</div>
<div class="t" style="left:241.3px;top:248px;line-height:21px;color:#4a4a4a">Ctrl+Shift+F9</div>
<div class="t" style="left:24px;top:269px;line-height:21px;">Save 'AppendDocument....main()'</div>
<div class="t" style="left:24px;top:290px;line-height:21px;color:#fff;">R<u>u</u>n 'AppendDocument....main()'</div>
<div class="t" style="left:235px;top:290px;line-height:21px;color:#222">Ctrl+Shift+F10</div>
<div class="t" style="left:24px;top:311px;line-height:21px;"><u>D</u>ebug 'AppendDocument....main()'</div>
<div class="t" style="left:24px;top:332px;line-height:21px;">Run 'AppendDocument....main()' with Coverage</div>
<div class="a" style="left:0;top:106px;width:260px;height:1px;background:#c9c9c9"></div><div class="a" style="left:0;top:107px;width:260px;height:1px;background:#f4f4f4"></div>
<div class="a" style="left:0;top:173px;width:260px;height:1px;background:#c9c9c9"></div><div class="a" style="left:0;top:174px;width:260px;height:1px;background:#f4f4f4"></div>
<div class="a" style="left:0;top:198px;width:260px;height:1px;background:#c9c9c9"></div><div class="a" style="left:0;top:199px;width:260px;height:1px;background:#f4f4f4"></div>
<div class="a" style="left:0;top:244px;width:260px;height:1px;background:#c9c9c9"></div><div class="a" style="left:0;top:245px;width:260px;height:1px;background:#f4f4f4"></div>
<svg style="left:4px;top:23px" width="15" height="17" viewBox="0 0 15 17"><path d="M5 1.5h9v11.5H9V6.5L5.5 3z" fill="#c88f48"/><rect x="7.5" y="0" width="4.5" height="1" fill="#8a8a8a"/><path d="M0.8 4.8h5.2l3.6 3.6v7.8H0.8z" fill="#ececec" stroke="#8a8a8a" stroke-width="1.6"/><path d="M5.8 4.8v3.8h3.8" stroke="#8a8a8a" stroke-width="1.2" fill="none"/></svg>
<svg style="left:4px;top:271px" width="15" height="15" viewBox="0 0 15 15"><rect x="0.5" y="0.5" width="10" height="8" fill="#f0f0f0" stroke="#9a9a9a"/><rect x="0.5" y="0.5" width="10" height="1.5" fill="#9a9a9a"/><rect x="3.5" y="5.5" width="11" height="9" fill="#bfe0f7" stroke="#4f92c6"/><rect x="3.5" y="5.5" width="11" height="2" fill="#4f92c6"/></svg>
<svg style="left:6px;top:292px" width="12" height="15" viewBox="0 0 12 15"><path d="M0.5 0.5L11.5 7.5L0.5 14.5z" fill="#27a03e"/></svg>
<svg style="left:4px;top:313px" width="16" height="16" viewBox="0 0 16 16"><path d="M3 1.8l1.3 1.5M6.5 1.2v2M10 1.8L8.7 3.3M3 14.2l1.3-1.5M6.5 14.8v-2M10 14.2l-1.3-1.5" stroke="#666" stroke-width="1"/><path d="M10 4.4A5 5 0 1 0 10 11.6A4.5 4.5 0 0 1 10 4.4z" fill="#2ea446"/><ellipse cx="11.2" cy="8" rx="1.5" ry="2.6" fill="#6a6a6a"/><path d="M12.3 4.8q0.8-1 2.3-0.8M12.3 11.2q0.8 1 2.3 0.8" stroke="#666" stroke-width="1.1" fill="none"/></svg>
<svg style="left:4px;top:333px" width="15" height="16" viewBox="0 0 15 16"><path d="M0.5 2.5L6.5 8L0.5 13.5z" fill="#27a03e"/><g fill="#555"><circle cx="5.75" cy="12.40" r="0.85"/><circle cx="7.25" cy="3.65" r="0.85"/><circle cx="7.25" cy="7.15" r="0.85"/><circle cx="7.25" cy="10.65" r="0.85"/><circle cx="7.25" cy="14.15" r="0.85"/><circle cx="8.75" cy="1.90" r="0.85"/><circle cx="8.75" cy="5.40" r="0.85"/><circle cx="8.75" cy="8.90" r="0.85"/><circle cx="8.75" cy="12.40" r="0.85"/><circle cx="10.25" cy="3.65" r="0.85"/><circle cx="10.25" cy="7.15" r="0.85"/><circle cx="10.25" cy="10.65" r="0.85"/><circle cx="10.25" cy="14.15" r="0.85"/><circle cx="11.75" cy="5.40" r="0.85"/><circle cx="11.75" cy="8.90" r="0.85"/><circle cx="11.75" cy="12.40" r="0.85"/><circle cx="13.25" cy="3.65" r="0.85"/><circle cx="13.25" cy="7.15" r="0.85"/><circle cx="13.25" cy="10.65" r="0.85"/><circle cx="14.75" cy="8.90" r="0.85"/></g></svg>
</div><!--/ctx-->
</body></html>
